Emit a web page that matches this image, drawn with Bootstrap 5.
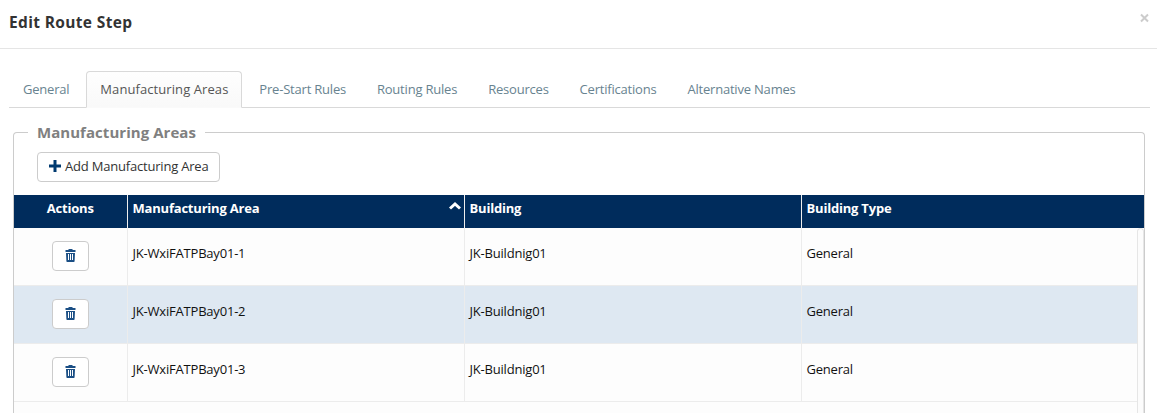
<!DOCTYPE html>
<html lang="en">
<head>
<meta charset="utf-8">
<meta name="viewport" content="width=device-width, initial-scale=1">
<title>Edit Route Step</title>
<link href="https://cdn.jsdelivr.net/npm/bootstrap@5.3.0/dist/css/bootstrap.min.css" rel="stylesheet">
<style>
body{font-family:"Open Sans",sans-serif;font-size:13px;line-height:20px;letter-spacing:-.2px;color:#222;background:#fff;height:100vh;overflow:hidden}
.dialog-head{height:49px;border-bottom:1px solid #e5e5e5;padding:0 7px 4px 9px}
.dialog-title{font-size:15.5px;font-weight:700;letter-spacing:.35px;color:#333}
.close-x{border:0;background:none;padding:0;width:11px;height:20px;margin-top:-8px;line-height:0}
.route-tabs{margin:22px 7px 0 9px;height:37px;border-bottom:1px solid #d9d9d9}
.route-tabs .nav-link{height:37px;padding:7px 13px 0;margin:0 2.9px 0 0;color:#688390;border:1px solid transparent;border-radius:4px 4px 0 0;white-space:nowrap}
.route-tabs .nav-link.active{color:#555;font-weight:500;letter-spacing:.08px;border-color:#d9d9d9 #d9d9d9 #fafafa;background:linear-gradient(#fefefe,#f9f9f9)}
.areas{margin:13px 12px 0 13px;border:1px solid #ccc;border-radius:4px;height:292px;border-bottom:0;border-bottom-left-radius:0;border-bottom-right-radius:0}
.areas legend{float:none;width:auto;margin:0 0 0 14px;padding:0 9px;font-size:15px;line-height:22px;letter-spacing:.05px;font-weight:700;color:#808080}
.tool-btn{border:1px solid #ccc;border-radius:4px;background:#fff;color:#333;font-size:13px;line-height:20px;letter-spacing:-.2px}
.add-btn{margin:9px 0 13px 23px;width:183px;height:30px;padding:0 0 2px 11px}
.grid-row{display:grid;grid-template-columns:114px 337px 337px 1fr}
.grid-head{height:33px;background:#002c5c;color:#fff;font-weight:700}
.grid-head>div{padding:3px 4.5px}
.grid-head>div:first-child{padding-right:6px}
.grid-head>div+div{border-left:1px solid #eee}
.grid-head>div:nth-child(n+2),.grid-line>div:nth-child(n+2){margin-left:-1px}
.grid-view{height:185px}
.grid-line{height:58px;background:#fdfdfd;border-bottom:1px solid #ececec;color:#111}
.grid-line.alt{background:#dee8f2}
.grid-line>div+div{border-left:1px solid #ececec;padding:15px 4.5px}
.trash-btn{width:37px;height:30px;margin:13px 1px 0 0;padding:0 0 4px}
.grid-track{width:7px;border:1px solid #e6e6e6;border-bottom:0;border-radius:4px 4px 0 0;background:#fcfcfc}
</style>
</head>
<body>
<header class="dialog-head d-flex align-items-center justify-content-between">
  <h1 class="dialog-title mb-0">Edit Route Step</h1>
  <button class="close-x" type="button" aria-label="Close"><svg width="11" height="20" viewBox="0 0 11 20"><path d="M2 6.500l7 7M9 6.500l-7 7" stroke="#ccc" stroke-width="2"/></svg></button>
</header>
<ul class="nav nav-tabs route-tabs flex-nowrap">
  <li class="nav-item"><a class="nav-link" href="#">General</a></li>
  <li class="nav-item"><a class="nav-link active" href="#">Manufacturing Areas</a></li>
  <li class="nav-item"><a class="nav-link" href="#">Pre-Start Rules</a></li>
  <li class="nav-item"><a class="nav-link" href="#">Routing Rules</a></li>
  <li class="nav-item"><a class="nav-link" href="#">Resources</a></li>
  <li class="nav-item"><a class="nav-link" href="#">Certifications</a></li>
  <li class="nav-item"><a class="nav-link" href="#">Alternative Names</a></li>
</ul>
<svg class="d-none">
  <symbol id="trash" viewBox="0 0 11 13"><path fill="#1b4f85" fill-rule="evenodd" d="M3.500 0h4v1H10.500V3H.5V1h3zM1 4h9l-.4 8.200q0 .8-.8.8H2.200q-.8 0-.8-.8zM3 5v6h1V5zM5 5v6h1V5zM7 5v6h1V5z"/></symbol>
</svg>
<fieldset class="areas">
  <legend>Manufacturing Areas</legend>
  <button class="tool-btn add-btn d-flex align-items-center" type="button"><svg width="12" height="13" viewBox="0 0 12 13"><path d="M4.500 0h3v4.500H12v3H7.500V12h-3V7.500H0v-3h4.500z" fill="#003a70"/></svg><span class="ps-1">Add Manufacturing Area</span></button>
  <div class="grid-row grid-head">
    <div class="text-center">Actions</div>
    <div class="d-flex justify-content-between pe-0"><span>Manufacturing Area</span><svg class="me-1" width="12" height="20" viewBox="1 0 12 20"><path d="M2 10.500l5-4.500 5 4.500" fill="none" stroke="#fff" stroke-width="3"/></svg></div>
    <div>Building</div>
    <div>Building Type</div>
  </div>
  <div class="grid-view d-flex overflow-hidden">
    <div class="flex-grow-1">
      <div class="grid-row grid-line"><div class="text-center"><button class="tool-btn trash-btn" type="button" aria-label="Delete"><svg width="11" height="13"><use href="#trash"/></svg></button></div><div>JK-WxiFATPBay01-1</div><div>JK-Buildnig01</div><div>General</div></div>
      <div class="grid-row grid-line alt"><div class="text-center"><button class="tool-btn trash-btn" type="button" aria-label="Delete"><svg width="11" height="13"><use href="#trash"/></svg></button></div><div>JK-WxiFATPBay01-2</div><div>JK-Buildnig01</div><div>General</div></div>
      <div class="grid-row grid-line"><div class="text-center"><button class="tool-btn trash-btn" type="button" aria-label="Delete"><svg width="11" height="13"><use href="#trash"/></svg></button></div><div>JK-WxiFATPBay01-3</div><div>JK-Buildnig01</div><div>General</div></div>
      <div class="grid-line"></div>
    </div>
    <div class="grid-track"></div>
  </div>
</fieldset>
<script src="https://cdn.jsdelivr.net/npm/bootstrap@5.3.0/dist/js/bootstrap.bundle.min.js"></script>
</body>
</html>
